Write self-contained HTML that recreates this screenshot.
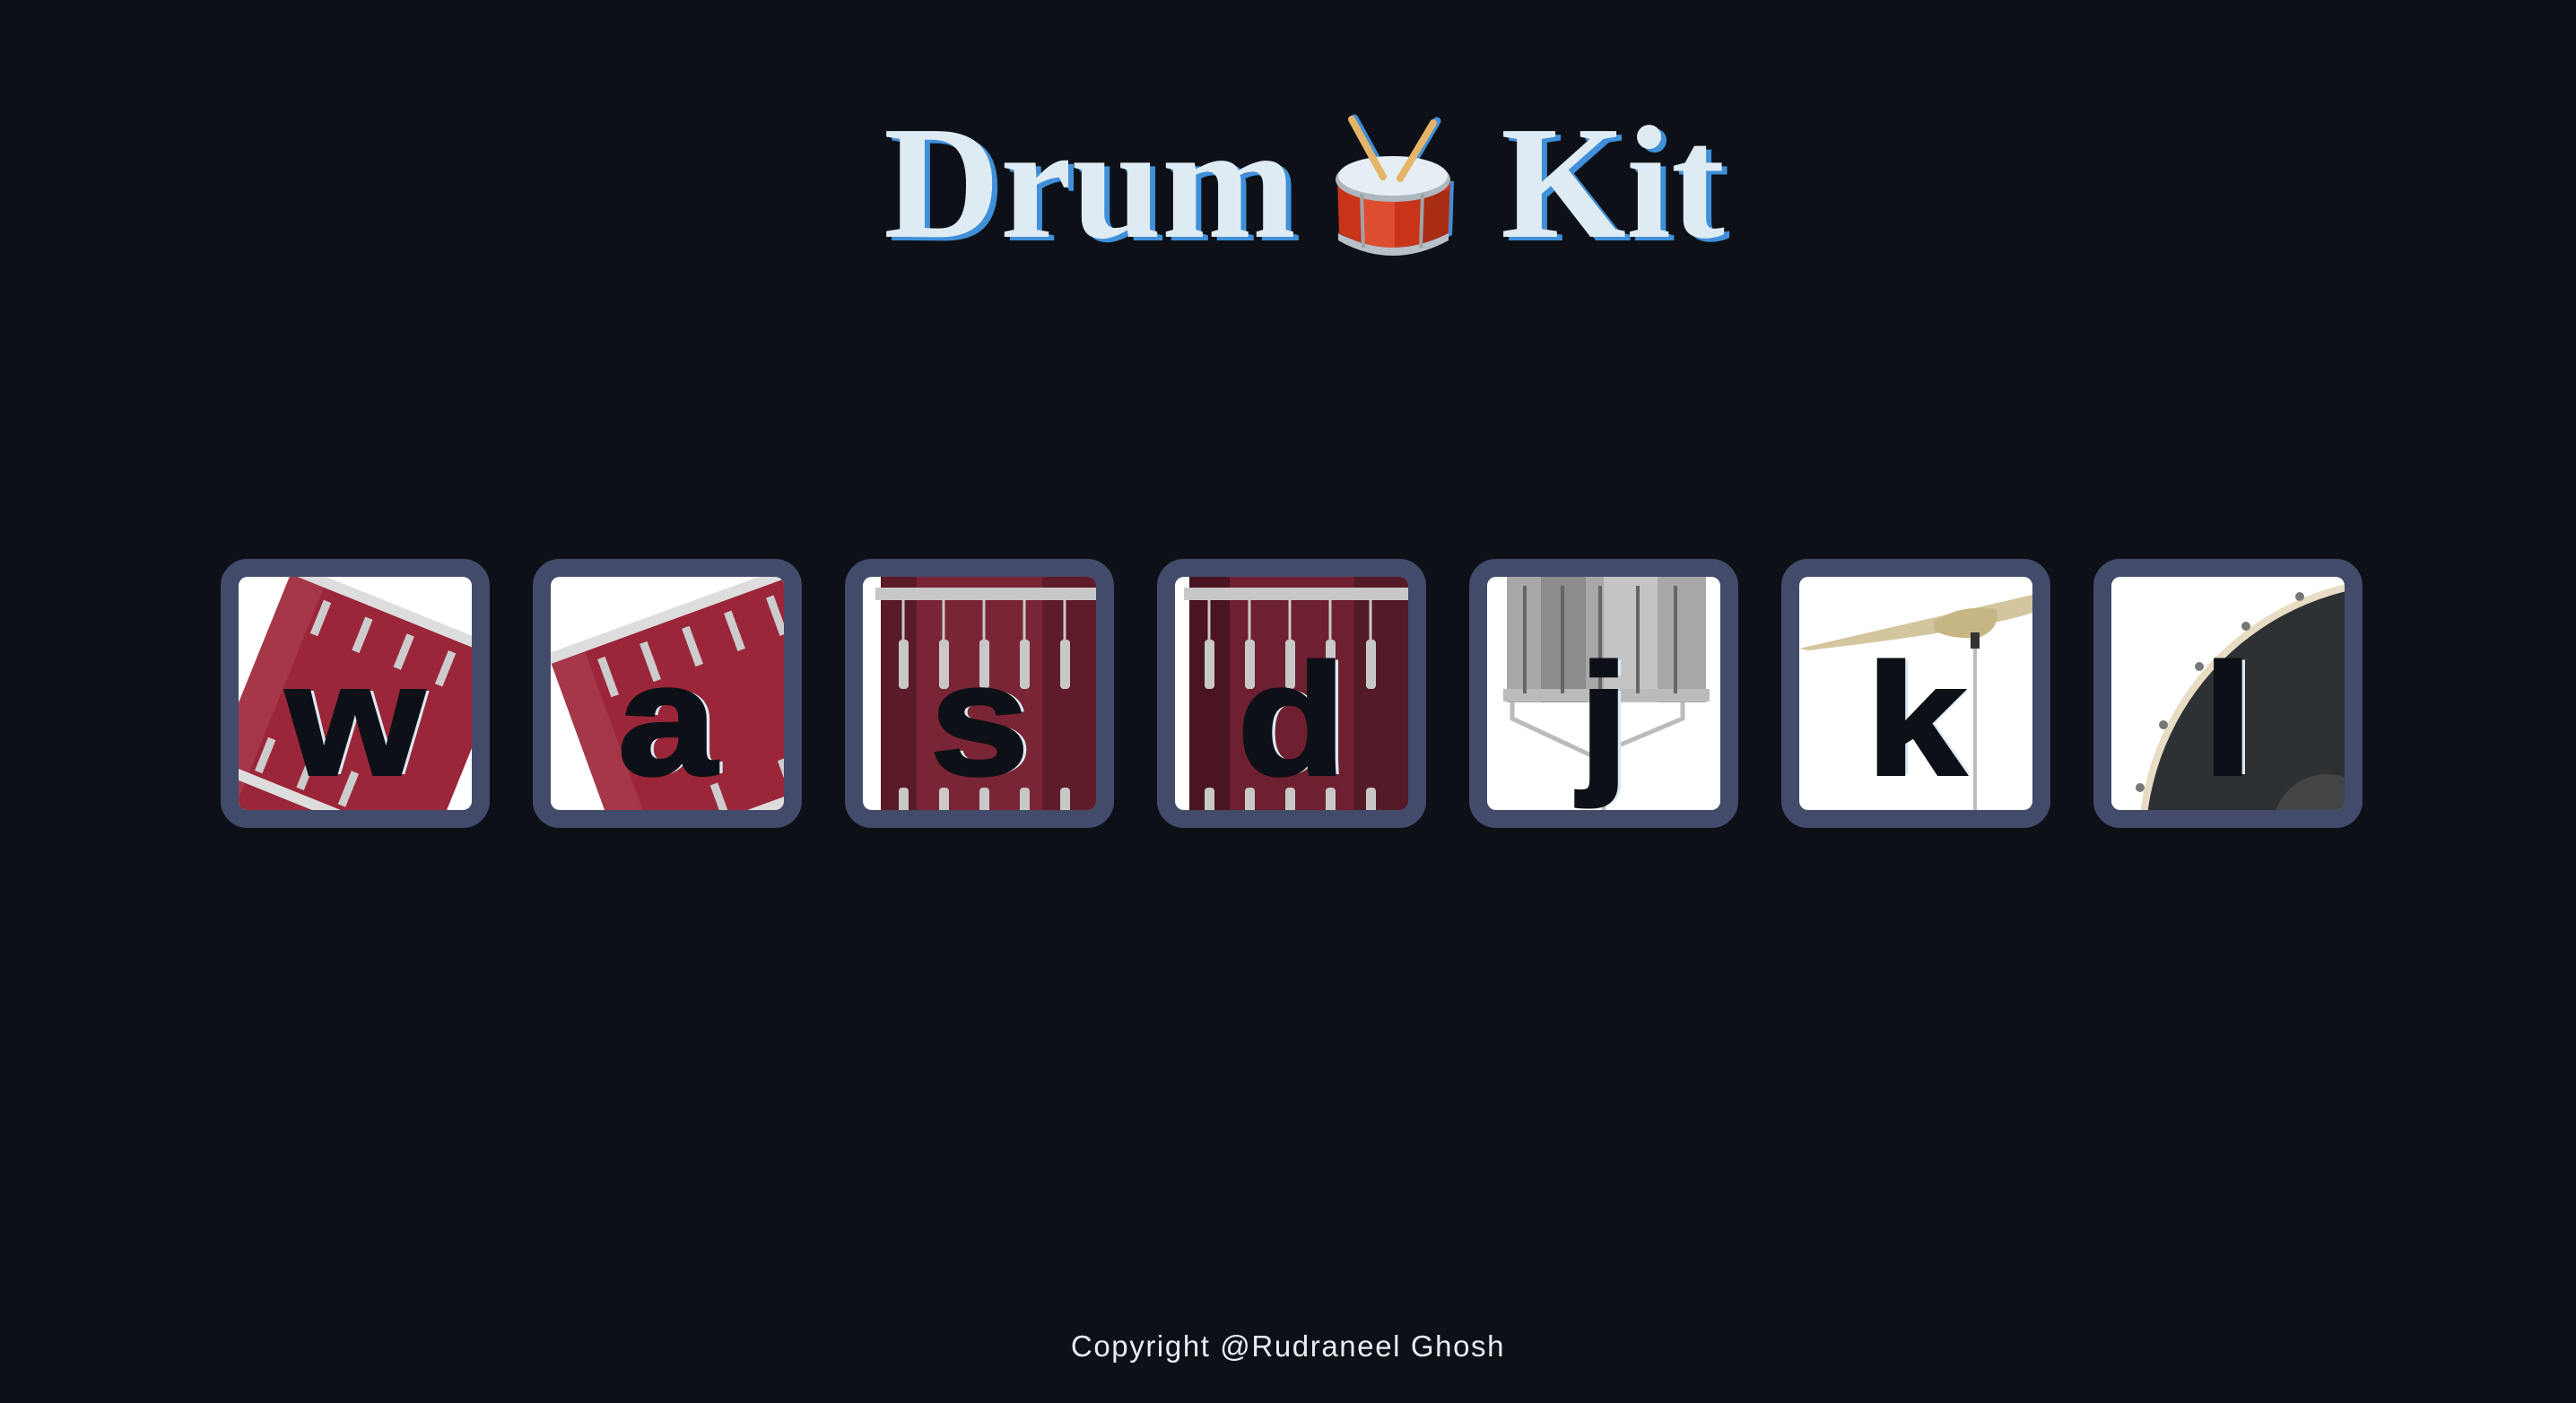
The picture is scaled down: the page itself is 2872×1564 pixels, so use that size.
<!DOCTYPE html>
<html><head><meta charset="utf-8">
<style>
html,body{margin:0;padding:0;width:2872px;height:1564px;background:#0d1117;overflow:hidden;font-family:"Liberation Sans",sans-serif}
.t{position:absolute;top:104px;font-family:"Liberation Serif",serif;font-weight:bold;font-size:180px;line-height:200px;color:#dfebf3;text-shadow:6px 4px 0 #3f8fd9;white-space:nowrap}
.box{position:absolute;top:623px;width:260px;height:260px;border:20px solid #434b6b;border-radius:30px;background:#434b6b}
.in{position:absolute;left:0;top:0;width:260px;height:260px;border-radius:10px;overflow:hidden;background:#fff}
.in svg{position:absolute;left:0;top:0}
.k{position:absolute;left:0;top:74px;width:260px;text-align:center;font-weight:bold;font-size:176px;line-height:172px;color:#0d1117;text-shadow:5px 0 0 #dbe9f1;-webkit-text-stroke:4px #0d1117;transform:scaleX(1.12)}
.f{position:absolute;top:1482px;left:0;width:2872px;text-align:center;color:#e6eef4;font-size:33px;letter-spacing:1.6px}
</style></head><body>
<div class="t" style="left:985px">Drum</div>
<div class="t" style="left:1673px">Kit</div>
<svg style="position:absolute;left:1480px;top:120px" width="160" height="170" viewBox="0 0 160 170">
<path d="M11 80 L13 140 Q72 175 135 140 L137 80 Z" fill="#3f8fd9" transform="translate(4,2)"/>
<line x1="30" y1="12" x2="65" y2="76" stroke="#3f8fd9" stroke-width="9" stroke-linecap="round"/>
<line x1="122" y1="15" x2="85" y2="78" stroke="#3f8fd9" stroke-width="9" stroke-linecap="round"/>
<path d="M11 80 L13 140 Q72 172 135 140 L137 80 Z" fill="#c8341a"/>
<path d="M40 95 L42 152 Q60 158 75 158 L75 100 Z" fill="#ee6244" opacity=".55"/>
<path d="M105 96 L105 154 Q125 150 134 140 L136 92 Z" fill="#8a2410" opacity=".5"/>
<path d="M12 140 Q72 172 135 140 L135 148 Q72 182 12 148 Z" fill="#b8c0c8"/>
<ellipse cx="73" cy="80" rx="64" ry="25" fill="#aeb6be"/>
<ellipse cx="73" cy="76" rx="61" ry="22" fill="#e4eef4"/>
<line x1="38" y1="96" x2="40" y2="156" stroke="#a0a4a8" stroke-width="4"/>
<line x1="106" y1="96" x2="104" y2="156" stroke="#a0a4a8" stroke-width="4"/>
<line x1="27" y1="13" x2="62" y2="77" stroke="#e6b468" stroke-width="8" stroke-linecap="round"/>
<line x1="118" y1="17" x2="81" y2="79" stroke="#e6b468" stroke-width="8" stroke-linecap="round"/>
</svg>

<div class="box" style="left:246px"><div class="in">
<svg width="260" height="260" viewBox="0 0 260 260"><g transform="translate(170,40) rotate(22)">
<rect x="-120" y="0" width="260" height="300" fill="#9b2639"/>
<rect x="-120" y="0" width="40" height="300" fill="#b0485a" opacity=".5"/>
<rect x="-125" y="-10" width="270" height="12" fill="#ddd"/>
<rect x="-125" y="225" width="270" height="12" fill="#ddd"/>
<g fill="#ccc"><rect x="-75" y="15" width="9" height="40"/><rect x="-25" y="15" width="9" height="40"/><rect x="25" y="15" width="9" height="40"/><rect x="75" y="15" width="9" height="40"/>
<rect x="-75" y="180" width="9" height="40"/><rect x="-25" y="180" width="9" height="40"/><rect x="25" y="180" width="9" height="40"/></g>
</g></svg>
<div class="k">w</div></div></div>

<div class="box" style="left:594px"><div class="in">
<svg width="260" height="260" viewBox="0 0 260 260"><g transform="translate(0,95) rotate(-20)">
<rect x="0" y="0" width="300" height="300" fill="#9b2639"/>
<rect x="0" y="0" width="40" height="300" fill="#b0485a" opacity=".5"/>
<rect x="-5" y="-10" width="310" height="12" fill="#ddd"/>
<rect x="-5" y="230" width="310" height="12" fill="#ddd"/>
<g fill="#ccc"><rect x="50" y="15" width="9" height="45"/><rect x="100" y="15" width="9" height="45"/><rect x="150" y="15" width="9" height="45"/><rect x="200" y="15" width="9" height="45"/><rect x="250" y="15" width="9" height="45"/>
<rect x="120" y="190" width="9" height="40"/><rect x="200" y="190" width="9" height="40"/></g>
</g></svg>
<div class="k">a</div></div></div>

<div class="box" style="left:942px"><div class="in">
<svg width="260" height="260" viewBox="0 0 260 260">
<rect x="20" y="0" width="260" height="260" fill="#7a2535"/>
<rect x="20" y="0" width="40" height="260" fill="#5a1a28"/>
<rect x="200" y="0" width="60" height="260" fill="#5e1c2a"/>
<rect x="14" y="12" width="260" height="14" fill="#c8c8c8"/>
<g fill="#c8c8c8"><rect x="40" y="70" width="11" height="55" rx="4"/><rect x="85" y="70" width="11" height="55" rx="4"/><rect x="130" y="70" width="11" height="55" rx="4"/><rect x="175" y="70" width="11" height="55" rx="4"/><rect x="220" y="70" width="11" height="55" rx="4"/>
<rect x="40" y="235" width="11" height="30" rx="4"/><rect x="85" y="235" width="11" height="30" rx="4"/><rect x="130" y="235" width="11" height="30" rx="4"/><rect x="175" y="235" width="11" height="30" rx="4"/><rect x="220" y="235" width="11" height="30" rx="4"/></g>
<g stroke="#c8c8c8" stroke-width="3"><line x1="45" y1="26" x2="45" y2="70"/><line x1="90" y1="26" x2="90" y2="70"/><line x1="135" y1="26" x2="135" y2="70"/><line x1="180" y1="26" x2="180" y2="70"/><line x1="225" y1="26" x2="225" y2="70"/></g>
</svg>
<div class="k">s</div></div></div>

<div class="box" style="left:1290px"><div class="in">
<svg width="260" height="260" viewBox="0 0 260 260">
<rect x="16" y="0" width="260" height="260" fill="#6e2030"/>
<rect x="16" y="0" width="45" height="260" fill="#4a1420"/>
<rect x="200" y="0" width="60" height="260" fill="#551a28"/>
<rect x="10" y="12" width="260" height="14" fill="#c8c8c8"/>
<g fill="#c8c8c8"><rect x="33" y="70" width="11" height="55" rx="4"/><rect x="78" y="70" width="11" height="55" rx="4"/><rect x="123" y="70" width="11" height="55" rx="4"/><rect x="168" y="70" width="11" height="55" rx="4"/><rect x="213" y="70" width="11" height="55" rx="4"/>
<rect x="33" y="235" width="11" height="30" rx="4"/><rect x="78" y="235" width="11" height="30" rx="4"/><rect x="123" y="235" width="11" height="30" rx="4"/><rect x="168" y="235" width="11" height="30" rx="4"/><rect x="213" y="235" width="11" height="30" rx="4"/></g>
<g stroke="#c8c8c8" stroke-width="3"><line x1="38" y1="26" x2="38" y2="70"/><line x1="83" y1="26" x2="83" y2="70"/><line x1="128" y1="26" x2="128" y2="70"/><line x1="173" y1="26" x2="173" y2="70"/><line x1="218" y1="26" x2="218" y2="70"/></g>
</svg>
<div class="k">d</div></div></div>

<div class="box" style="left:1638px"><div class="in">
<svg width="260" height="260" viewBox="0 0 260 260">
<rect x="22" y="0" width="222" height="140" fill="#a8a8a8"/>
<rect x="60" y="0" width="50" height="140" fill="#8c8c8c"/>
<rect x="130" y="0" width="60" height="140" fill="#c4c4c4"/>
<rect x="18" y="125" width="230" height="14" fill="#bbb"/>
<g fill="#666"><rect x="40" y="10" width="4" height="120"/><rect x="82" y="10" width="4" height="120"/><rect x="124" y="10" width="4" height="120"/><rect x="166" y="10" width="4" height="120"/><rect x="208" y="10" width="4" height="120"/></g>
<g stroke="#bbb" stroke-width="5" fill="none"><path d="M28 140 V158 L118 200 L218 158 V140"/><line x1="130" y1="200" x2="130" y2="260"/></g>
</svg>
<div class="k">j</div></div></div>

<div class="box" style="left:1986px"><div class="in">
<svg width="260" height="260" viewBox="0 0 260 260">
<line x1="196" y1="70" x2="196" y2="260" stroke="#bbb" stroke-width="4"/>
<path d="M0 80 L260 20 L260 40 Q200 60 10 82 Z" fill="#d3c59d"/>
<path d="M150 50 Q180 30 220 36 Q225 58 200 68 Q170 70 150 60 Z" fill="#c7b685"/>
<rect x="191" y="62" width="10" height="18" fill="#333"/>
</svg>
<div class="k">k</div></div></div>

<div class="box" style="left:2334px"><div class="in">
<svg width="260" height="260" viewBox="0 0 260 260">
<circle cx="330" cy="300" r="300" fill="#e8dcc4"/>
<circle cx="330" cy="300" r="292" fill="#2e3133"/>
<circle cx="240" cy="280" r="60" fill="#444"/>
<g fill="#777"><circle cx="210" cy="22" r="5"/><circle cx="150" cy="55" r="5"/><circle cx="98" cy="100" r="5"/><circle cx="58" cy="165" r="5"/><circle cx="32" cy="235" r="5"/></g>
</svg>
<div class="k">l</div></div></div>

<div class="f">Copyright @Rudraneel Ghosh</div>
</body></html>
